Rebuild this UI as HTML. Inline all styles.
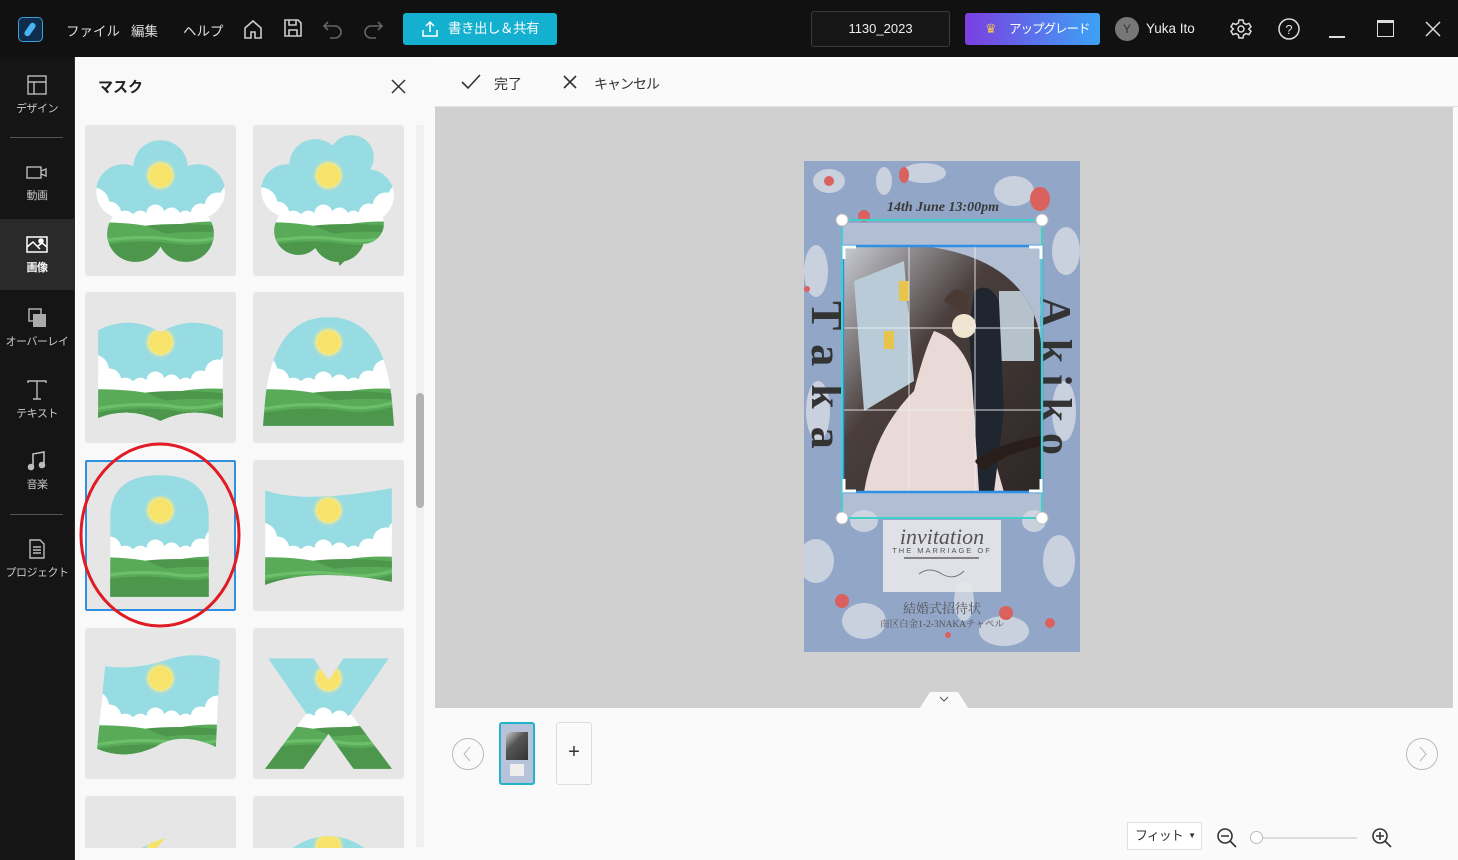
<!DOCTYPE html>
<html><head><meta charset="utf-8">
<style>
*{margin:0;padding:0;box-sizing:border-box}
html,body{width:1458px;height:860px;overflow:hidden}
body{background:#111;font-family:"Liberation Sans","Noto Sans CJK JP",sans-serif;position:relative}
.abs{position:absolute}
.top{left:0;top:0;width:1458px;height:57px;background:#111;color:#ddd;font-size:13.5px}
.top span{position:absolute;top:20px;white-space:nowrap}
.side{left:0;top:57px;width:74px;height:803px;background:#151515}
.si{position:absolute;left:0;width:74px;text-align:center;color:#c8c8c8;font-size:11px;white-space:nowrap;letter-spacing:-0.5px}
.si svg{display:block;margin:0 auto 4px}
.panel{left:74px;top:57px;width:361px;height:803px;background:#f9f9f9;border-left:1px solid #2a2a2a;overflow:hidden}
.tile{position:absolute;width:151px;height:151px;background:#e6e6e6;border-radius:3px;overflow:hidden}
.tile svg{position:absolute;left:0;top:0}
.bar{left:435px;top:57px;width:1023px;height:50px;background:#fafafa;border-bottom:1px solid #e2e2e2;font-size:14px;color:#333}
.canvas{left:435px;top:107px;width:1018px;height:601px;background:#d0d0d0}
.bottom{left:435px;top:708px;width:1023px;height:152px;background:#fafafa}
</style></head><body>
<svg width="0" height="0" style="position:absolute;left:0;top:0">
<defs>
<radialGradient id="halo"><stop offset="0.55" stop-color="#f7e46a"/><stop offset="0.7" stop-color="#f3e88c"/><stop offset="1" stop-color="#97dce3" stop-opacity="0"/></radialGradient>
<symbol id="scene" viewBox="0 0 150 150">
<rect width="150" height="150" fill="#97dce3"/>
<circle cx="75" cy="50" r="17" fill="url(#halo)"/>
<circle cx="75" cy="50" r="11" fill="#f7e36a"/>
<g fill="#fff"><circle cx="8" cy="78" r="16"/><circle cx="24" cy="88" r="12"/><circle cx="40" cy="94" r="9"/><circle cx="55" cy="93" r="8"/><circle cx="70" cy="88" r="9"/><circle cx="86" cy="91" r="9"/><circle cx="100" cy="93" r="8"/><circle cx="115" cy="88" r="10"/><circle cx="132" cy="80" r="13"/><circle cx="148" cy="72" r="14"/><rect x="0" y="88" width="150" height="12"/></g>
<path d="M0 97 Q40 95 75 103 Q110 93 150 97 L150 150 L0 150Z" fill="#5aab59"/>
<path d="M0 122 Q50 112 90 118 Q120 122 150 110 L150 150 L0 150Z" fill="#4c974b"/>
<path d="M0 118 Q50 108 90 114 Q120 118 150 106" stroke="#6cc06a" stroke-width="3" fill="none"/>
<path d="M60 100 Q100 96 150 102 L150 108 Q110 104 80 108Z" fill="#4c974b"/>
</symbol>
<clipPath id="c1"><circle cx="75" cy="42" r="27"/><circle cx="38" cy="66" r="27"/><circle cx="112" cy="66" r="27"/><circle cx="50" cy="108" r="28"/><circle cx="100" cy="108" r="28"/><rect x="40" y="60" width="70" height="50"/></clipPath>
<clipPath id="c2"><circle cx="62" cy="40" r="26"/><circle cx="98" cy="32" r="22"/><circle cx="34" cy="65" r="26"/><circle cx="114" cy="70" r="26"/><circle cx="45" cy="105" r="24"/><circle cx="85" cy="110" r="26"/><circle cx="110" cy="98" r="20"/><rect x="40" y="50" width="70" height="55"/><path d="M78 110 L86 140 L96 130 L90 105Z"/></clipPath>
<clipPath id="c3"><path d="M13 38 Q44 22 75 40 Q106 22 137 38 L137 125 Q106 113 75 128 Q44 113 13 125Z"/></clipPath>
<clipPath id="c4"><path d="M10 133 L12 108 Q20 25 75 25 Q130 25 138 108 L140 133Z"/></clipPath>
<clipPath id="c5"><path d="M25 136 L25 58 Q25 15 74 15 Q123 15 123 58 L123 136Z"/></clipPath>
<clipPath id="c6"><path d="M12 30 Q50 44 138 28 L138 121 Q60 106 12 124Z"/></clipPath>
<clipPath id="c7"><path d="M20 38 Q50 42 80 32 Q110 22 134 32 L130 118 Q95 102 70 118 Q40 132 12 120Z"/></clipPath>
<clipPath id="c8"><path d="M15 30 L60 30 L75 52 L90 30 L135 30 L97 85 L138 140 L100 140 L75 105 L50 140 L12 140 L53 85Z"/></clipPath>
<clipPath id="c9"><path d="M5 160 Q10 60 80 42 Q40 80 60 160Z"/></clipPath>
<clipPath id="c10"><circle cx="75" cy="100" r="60"/></clipPath>
</defs></svg>

<!-- TOP BAR -->
<div class="abs top">
<div class="abs" style="left:18px;top:17px;width:25px;height:25px;border:1.5px solid #3aa0e0;border-radius:5px;background:#0d2d4a"><div style="position:absolute;left:8px;top:4px;width:6px;height:15px;background:#4ab3f5;border-radius:3px;transform:rotate(35deg)"></div></div>
<span style="left:66px">ファイル</span><span style="left:131px">編集</span><span style="left:183px">ヘルプ</span>
<svg class="abs" style="left:242px;top:18px" width="22" height="22" viewBox="0 0 22 22" fill="none" stroke="#ccc" stroke-width="1.6"><path d="M3 10 L11 3 L19 10 V20 H13 V14 H9 V20 H3Z"/></svg>
<svg class="abs" style="left:283px;top:18px" width="20" height="20" viewBox="0 0 20 20" fill="none" stroke="#ccc" stroke-width="1.6"><path d="M2 2 H15 L18 5 V18 H2Z M6 2 V7 H13 V2 M6 18 V12 H14 V18"/></svg>
<svg class="abs" style="left:322px;top:19px" width="22" height="20" viewBox="0 0 22 20" fill="none" stroke="#666" stroke-width="1.6"><path d="M6 3 L2 7 L6 11 M2 7 H13 A6 6 0 0 1 13 19 H8"/></svg>
<svg class="abs" style="left:362px;top:19px" width="22" height="20" viewBox="0 0 22 20" fill="none" stroke="#666" stroke-width="1.6"><path d="M16 3 L20 7 L16 11 M20 7 H9 A6 6 0 0 0 9 19 H14"/></svg>
<div class="abs" style="left:403px;top:13px;width:154px;height:32px;background:#13b0cf;border-radius:3px;color:#fff;font-size:13.5px;line-height:32px;padding-left:45px;white-space:nowrap;letter-spacing:-0.5px">書き出し＆共有
<svg class="abs" style="left:18px;top:7px" width="18" height="18" viewBox="0 0 18 18" fill="none" stroke="#fff" stroke-width="1.5"><path d="M9 12 V2 M5 6 L9 2 L13 6 M2 10 V16 H16 V10"/></svg></div>
<div class="abs" style="left:811px;top:11px;width:139px;height:36px;border:1px solid #3a3a3a;border-radius:3px;background:#171717;color:#eee;font-size:13px;line-height:34px;text-align:center">1130_2023</div>
<div class="abs" style="left:965px;top:13px;width:135px;height:32px;background:linear-gradient(90deg,#7b3fe0,#3ca3f5);border-radius:3px;color:#fff;font-size:12.5px;line-height:32px;padding-left:44px;white-space:nowrap;letter-spacing:-1px;overflow:hidden">アップグレード<span style="left:20px;top:0;color:#f4c54a;font-size:13px">♛</span></div>
<div class="abs" style="left:1115px;top:17px;width:24px;height:24px;border-radius:50%;background:#777;color:#333;font-size:12px;text-align:center;line-height:24px">Y</div>
<span style="left:1146px;top:21px;color:#eee">Yuka Ito</span>
<svg class="abs" style="left:1230px;top:18px" width="22" height="22" viewBox="0 0 22 22" fill="none" stroke="#ddd" stroke-width="1.5"><path d="M9 2 H13 L13.6 5 L16 6.4 L19 5.4 L21 8.8 L18.7 11 L21 13.2 L19 16.6 L16 15.6 L13.6 17 L13 20 H9 L8.4 17 L6 15.6 L3 16.6 L1 13.2 L3.3 11 L1 8.8 L3 5.4 L6 6.4 L8.4 5Z"/><circle cx="11" cy="11" r="3"/></svg>
<svg class="abs" style="left:1278px;top:18px" width="22" height="22" viewBox="0 0 22 22" fill="none" stroke="#ddd" stroke-width="1.5"><circle cx="11" cy="11" r="10"/><text x="11" y="16" text-anchor="middle" fill="#ddd" stroke="none" font-size="13" font-family="Liberation Sans">?</text></svg>
<div class="abs" style="left:1329px;top:36px;width:16px;height:1.5px;background:#ddd"></div>
<div class="abs" style="left:1377px;top:20px;width:17px;height:17px;border:1.5px solid #ddd;border-top-width:3px"></div>
<svg class="abs" style="left:1425px;top:21px" width="16" height="16" viewBox="0 0 16 16" stroke="#ddd" stroke-width="1.5"><path d="M1 1 L15 15 M15 1 L1 15"/></svg>
</div>

<!-- SIDEBAR -->
<div class="abs side">
<div class="si" style="top:17px"><svg width="22" height="22" viewBox="0 0 22 22" fill="none" stroke="#bbb" stroke-width="1.4"><rect x="2" y="2" width="18" height="18"/><path d="M2 8 H20 M8 8 V20"/></svg>デザイン</div>
<div class="abs" style="left:10px;top:80px;width:53px;height:1px;background:#555"></div>
<div class="si" style="top:106px"><svg width="24" height="20" viewBox="0 0 24 20" fill="none" stroke="#bbb" stroke-width="1.4"><rect x="2" y="4" width="14" height="11"/><path d="M16 8 L21 6 V13 L16 11"/></svg>動画</div>
<div class="abs" style="left:0;top:162px;width:74px;height:71px;background:#2a2a2a"></div>
<div class="si" style="top:178px;color:#fff;font-weight:bold"><svg width="24" height="20" viewBox="0 0 24 20" fill="none" stroke="#fff" stroke-width="1.5"><rect x="2" y="2" width="20" height="15"/><path d="M2 12 L8 7 L15 14 M13 11 L17 8 L22 12"/><circle cx="16" cy="6" r="2" fill="#fff"/></svg>画像</div>
<div class="si" style="top:250px"><svg width="22" height="22" viewBox="0 0 22 22"><rect x="3" y="2" width="12" height="12" fill="none" stroke="#bbb" stroke-width="1.4"/><rect x="7" y="7" width="13" height="13" fill="#aaa"/></svg>オーバーレイ</div>
<div class="si" style="top:322px"><svg width="22" height="22" viewBox="0 0 22 22" fill="none" stroke="#bbb" stroke-width="1.4"><path d="M2 4 V2 H20 V4 M11 2 V20 M7 20 H15"/></svg>テキスト</div>
<div class="si" style="top:393px"><svg width="22" height="22" viewBox="0 0 22 22" fill="none" stroke="#bbb" stroke-width="1.6"><path d="M7 17 V4 L18 2 V15"/><circle cx="5" cy="17" r="2.5" fill="#bbb"/><circle cx="16" cy="15" r="2.5" fill="#bbb"/></svg>音楽</div>
<div class="abs" style="left:10px;top:457px;width:53px;height:1px;background:#555"></div>
<div class="si" style="top:481px"><svg width="22" height="22" viewBox="0 0 22 22" fill="none" stroke="#bbb" stroke-width="1.4"><path d="M4 2 H14 L18 6 V20 H4Z M7 9 H15 M7 12 H15 M7 15 H15"/></svg>プロジェクト</div>
</div>

<!-- MASK PANEL -->
<div class="abs panel">
<div class="abs" style="left:23px;top:19px;font-size:15px;color:#222;font-weight:bold">マスク</div>
<svg class="abs" style="left:316px;top:22px" width="15" height="15" viewBox="0 0 15 15" stroke="#333" stroke-width="1.5"><path d="M1 1 L14 14 M14 1 L1 14"/></svg>
<div class="abs" style="left:341px;top:68px;width:8px;height:722px;background:#f0f0f0"></div>
<div class="abs" style="left:341px;top:336px;width:8px;height:115px;background:#b3b3b3;border-radius:4px"></div>
<div class="abs" style="left:0;top:68px;width:340px;height:723px;overflow:hidden">
<div class="tile" style="left:10px;top:0"><svg width="151" height="151" viewBox="0 0 150 150"><g clip-path="url(#c1)"><use href="#scene" width="150" height="150"/></g></svg></div>
<div class="tile" style="left:178px;top:0"><svg width="151" height="151" viewBox="0 0 150 150"><g clip-path="url(#c2)"><use href="#scene" width="150" height="150"/></g></svg></div>
<div class="tile" style="left:10px;top:167px"><svg width="151" height="151" viewBox="0 0 150 150"><g clip-path="url(#c3)"><use href="#scene" width="150" height="150"/></g></svg></div>
<div class="tile" style="left:178px;top:167px"><svg width="151" height="151" viewBox="0 0 150 150"><g clip-path="url(#c4)"><use href="#scene" width="150" height="150"/></g></svg></div>
<div class="tile" style="left:10px;top:335px;border:2px solid #2f8fe0;border-radius:2px"><svg width="151" height="151" viewBox="0 0 150 150" style="left:-2px;top:-2px"><g clip-path="url(#c5)"><use href="#scene" width="150" height="150"/></g></svg></div>
<div class="tile" style="left:178px;top:335px"><svg width="151" height="151" viewBox="0 0 150 150"><g clip-path="url(#c6)"><use href="#scene" width="150" height="150"/></g></svg></div>
<div class="tile" style="left:10px;top:503px"><svg width="151" height="151" viewBox="0 0 150 150"><g clip-path="url(#c7)"><use href="#scene" width="150" height="150"/></g></svg></div>
<div class="tile" style="left:178px;top:503px"><svg width="151" height="151" viewBox="0 0 150 150"><g clip-path="url(#c8)"><use href="#scene" width="150" height="150"/></g></svg></div>
<div class="tile" style="left:10px;top:671px"><svg width="151" height="151" viewBox="0 0 150 150"><g clip-path="url(#c9)"><use href="#scene" width="150" height="150"/></g></svg></div>
<div class="tile" style="left:178px;top:671px"><svg width="151" height="151" viewBox="0 0 150 150"><g clip-path="url(#c10)"><use href="#scene" width="150" height="150"/></g></svg></div>
</div>
<svg class="abs" style="left:0;top:385px" width="170" height="190" viewBox="0 0 170 190"><ellipse cx="85" cy="93" rx="79" ry="91" fill="none" stroke="#e01b24" stroke-width="3"/></svg>
</div>

<!-- TOOLBAR -->
<div class="abs bar">
<svg class="abs" style="left:26px;top:17px" width="20" height="16" viewBox="0 0 20 16" fill="none" stroke="#333" stroke-width="1.6"><path d="M1 8 L7 14 L19 1"/></svg>
<span class="abs" style="left:59px;top:17px">完了</span>
<svg class="abs" style="left:128px;top:18px" width="14" height="14" viewBox="0 0 14 14" stroke="#333" stroke-width="1.6"><path d="M1 1 L13 13 M13 1 L1 13"/></svg>
<span class="abs" style="left:159px;top:17px;letter-spacing:-1px">キャンセル</span>
</div>

<!-- CANVAS -->
<div class="abs canvas"></div>
<div class="abs" style="left:1453px;top:107px;width:5px;height:601px;background:#fafafa"></div>
<svg class="abs" style="left:804px;top:161px" width="276" height="491" viewBox="0 0 276 491">
<defs>
<clipPath id="pc"><path d="M39 331 V100 Q39 85 60 85 H120 Q238 100 238 200 V331Z"/></clipPath>
<linearGradient id="ph" x1="0" y1="0" x2="1" y2="1"><stop offset="0" stop-color="#c9ccd4"/><stop offset="0.4" stop-color="#4a3f3d"/><stop offset="1" stop-color="#2c2624"/></linearGradient>
</defs>
<rect width="276" height="491" fill="#92a6c8"/>
<g fill="#d3d8e2" opacity="0.85">
<ellipse cx="25" cy="20" rx="16" ry="12"/><ellipse cx="120" cy="12" rx="22" ry="10"/><ellipse cx="210" cy="30" rx="20" ry="15"/><ellipse cx="262" cy="90" rx="14" ry="24"/><ellipse cx="12" cy="110" rx="12" ry="26"/><ellipse cx="12" cy="400" rx="18" ry="22"/><ellipse cx="60" cy="460" rx="22" ry="18"/><ellipse cx="255" cy="400" rx="16" ry="26"/><ellipse cx="200" cy="470" rx="25" ry="15"/><ellipse cx="260" cy="250" rx="12" ry="30"/><ellipse cx="14" cy="250" rx="12" ry="30"/><ellipse cx="60" cy="360" rx="14" ry="11"/><ellipse cx="230" cy="360" rx="12" ry="11"/><ellipse cx="160" cy="440" rx="10" ry="20"/><ellipse cx="80" cy="20" rx="8" ry="14"/></g>
<g fill="#d9625e"><circle cx="25" cy="20" r="5"/><ellipse cx="236" cy="38" rx="10" ry="12"/><circle cx="60" cy="55" r="6"/><ellipse cx="100" cy="14" rx="5" ry="8"/><circle cx="38" cy="440" r="7"/><circle cx="202" cy="452" r="7"/><circle cx="246" cy="462" r="5"/><circle cx="3" cy="128" r="3"/><circle cx="144" cy="474" r="3"/></g>
<text x="139" y="50" text-anchor="middle" font-family="Liberation Serif" font-style="italic" font-weight="bold" font-size="14" fill="#3a3a3a">14th June 13:00pm</text>
<text transform="translate(8,140) rotate(90)" font-family="Liberation Serif" font-weight="bold" font-size="44" fill="#333" letter-spacing="18">Taka</text>
<text transform="translate(237,135) rotate(90)" font-family="Liberation Serif" font-weight="bold" font-size="44" fill="#333" letter-spacing="11">Akiko</text>
<rect x="39" y="62" width="199" height="294" fill="#d8dbe2" opacity="0.45"/>
<g clip-path="url(#pc)">
<rect x="39" y="85" width="199" height="246" fill="url(#ph)"/>
<path d="M50 120 L100 100 L110 220 L60 250Z" fill="#b8cbd6"/>
<rect x="95" y="120" width="10" height="20" fill="#e8c44a"/><rect x="80" y="170" width="10" height="18" fill="#e8c44a"/>
<rect x="195" y="130" width="35" height="70" fill="#b5c2cc"/>
<path d="M130 170 Q160 180 170 220 Q185 280 200 331 L60 331 Q70 270 110 230 Q120 190 130 170Z" fill="#e9dad8"/>
<path d="M140 140 Q150 120 165 135 L162 155 Z" fill="#4a3a33"/>
<path d="M170 130 Q185 120 195 140 L200 250 L190 331 L175 331 L170 250 L165 170Z" fill="#1f2630"/>
<circle cx="160" cy="165" r="12" fill="#eee4cf"/>
<path d="M170 300 Q200 280 238 275 L238 285 Q200 292 180 310Z" fill="#2a1e1a"/>
</g>
<g stroke="#eee" stroke-width="1" opacity="0.9"><path d="M105 85 V331 M171 85 V331 M39 167 H238 M39 249 H238"/></g>
<rect x="39" y="85" width="199" height="246" fill="none" stroke="#2f90e6" stroke-width="2.5"/>
<rect x="38" y="59" width="200" height="298" fill="none" stroke="#40d0c8" stroke-width="2"/>
<g stroke="#fff" stroke-width="3" fill="none"><path d="M40 98 V86 H52 M225 86 H237 V98 M40 318 V330 H52 M225 330 H237 V318"/></g>
<g fill="#fff" stroke="#bbb"><circle cx="38" cy="59" r="6"/><circle cx="238" cy="59" r="6"/><circle cx="38" cy="357" r="6"/><circle cx="238" cy="357" r="6"/></g>
<rect x="79" y="359" width="118" height="72" fill="#e6e6e8" opacity="0.92"/>
<text x="138" y="383" text-anchor="middle" font-family="Liberation Serif" font-style="italic" font-size="22" fill="#555">invitation</text>
<text x="138" y="392" text-anchor="middle" font-family="Liberation Sans" font-size="7.5" letter-spacing="2" fill="#555">THE MARRIAGE OF</text>
<path d="M100 397 H175" stroke="#666" stroke-width="1.5"/>
<path d="M115 413 Q125 405 138 413 Q150 420 160 410" stroke="#777" fill="none"/>
<text x="138" y="452" text-anchor="middle" font-family="Noto Serif CJK SC,serif" font-size="13" fill="#555">結婚式招待状</text>
<text x="138" y="466" text-anchor="middle" font-family="Liberation Serif,Noto Serif CJK SC,serif" font-size="9.5" fill="#555">南区白金1-2-3NAKAチャペル</text>
</svg>
<svg class="abs" style="left:920px;top:690px" width="48" height="18" viewBox="0 0 48 18"><path d="M0 18 L10 2 H38 L48 18Z" fill="#fafafa"/><path d="M20 7 L24 11 L28 7" stroke="#555" fill="none"/></svg>

<!-- BOTTOM -->
<div class="abs bottom">
<svg class="abs" style="left:17px;top:30px" width="32" height="32" viewBox="0 0 32 32" fill="none" stroke="#bbb"><circle cx="16" cy="16" r="15.5"/><path d="M18 9 L12 16 L18 23"/></svg>
<div class="abs" style="left:64px;top:14px;width:36px;height:63px;border:2px solid #22b3c9;border-radius:3px;background:#b7c3da;overflow:hidden"><div style="position:absolute;left:5px;top:8px;width:22px;height:28px;background:linear-gradient(135deg,#ccc,#555 40%,#333)"></div><div style="position:absolute;left:9px;top:40px;width:14px;height:12px;background:#eee"></div></div>
<div class="abs" style="left:121px;top:14px;width:36px;height:63px;border:1.5px solid #ddd;border-radius:3px;background:#fafafa;text-align:center;line-height:58px;font-size:20px;color:#333">+</div>
<svg class="abs" style="left:971px;top:30px" width="32" height="32" viewBox="0 0 32 32" fill="none" stroke="#bbb"><circle cx="16" cy="16" r="15.5"/><path d="M14 9 L20 16 L14 23"/></svg>
<div class="abs" style="left:692px;top:114px;width:75px;height:28px;border:1px solid #e0e0e0;background:#fff;font-size:13px;color:#333;line-height:26px;padding-left:7px;letter-spacing:-1px;white-space:nowrap">フィット<span style="position:absolute;right:6px;font-size:8px">▼</span></div>
<svg class="abs" style="left:781px;top:119px" width="22" height="22" viewBox="0 0 22 22" fill="none" stroke="#333" stroke-width="1.6"><circle cx="9" cy="9" r="7"/><path d="M5 9 H13 M14 14 L20 20"/></svg>
<div class="abs" style="left:820px;top:129px;width:102px;height:2px;background:#ddd"></div>
<div class="abs" style="left:815px;top:123px;width:13px;height:13px;border-radius:50%;border:1px solid #bbb;background:#fff"></div>
<svg class="abs" style="left:936px;top:119px" width="22" height="22" viewBox="0 0 22 22" fill="none" stroke="#333" stroke-width="1.6"><circle cx="9" cy="9" r="7"/><path d="M5 9 H13 M9 5 V13 M14 14 L20 20"/></svg>
</div>
</body></html>
